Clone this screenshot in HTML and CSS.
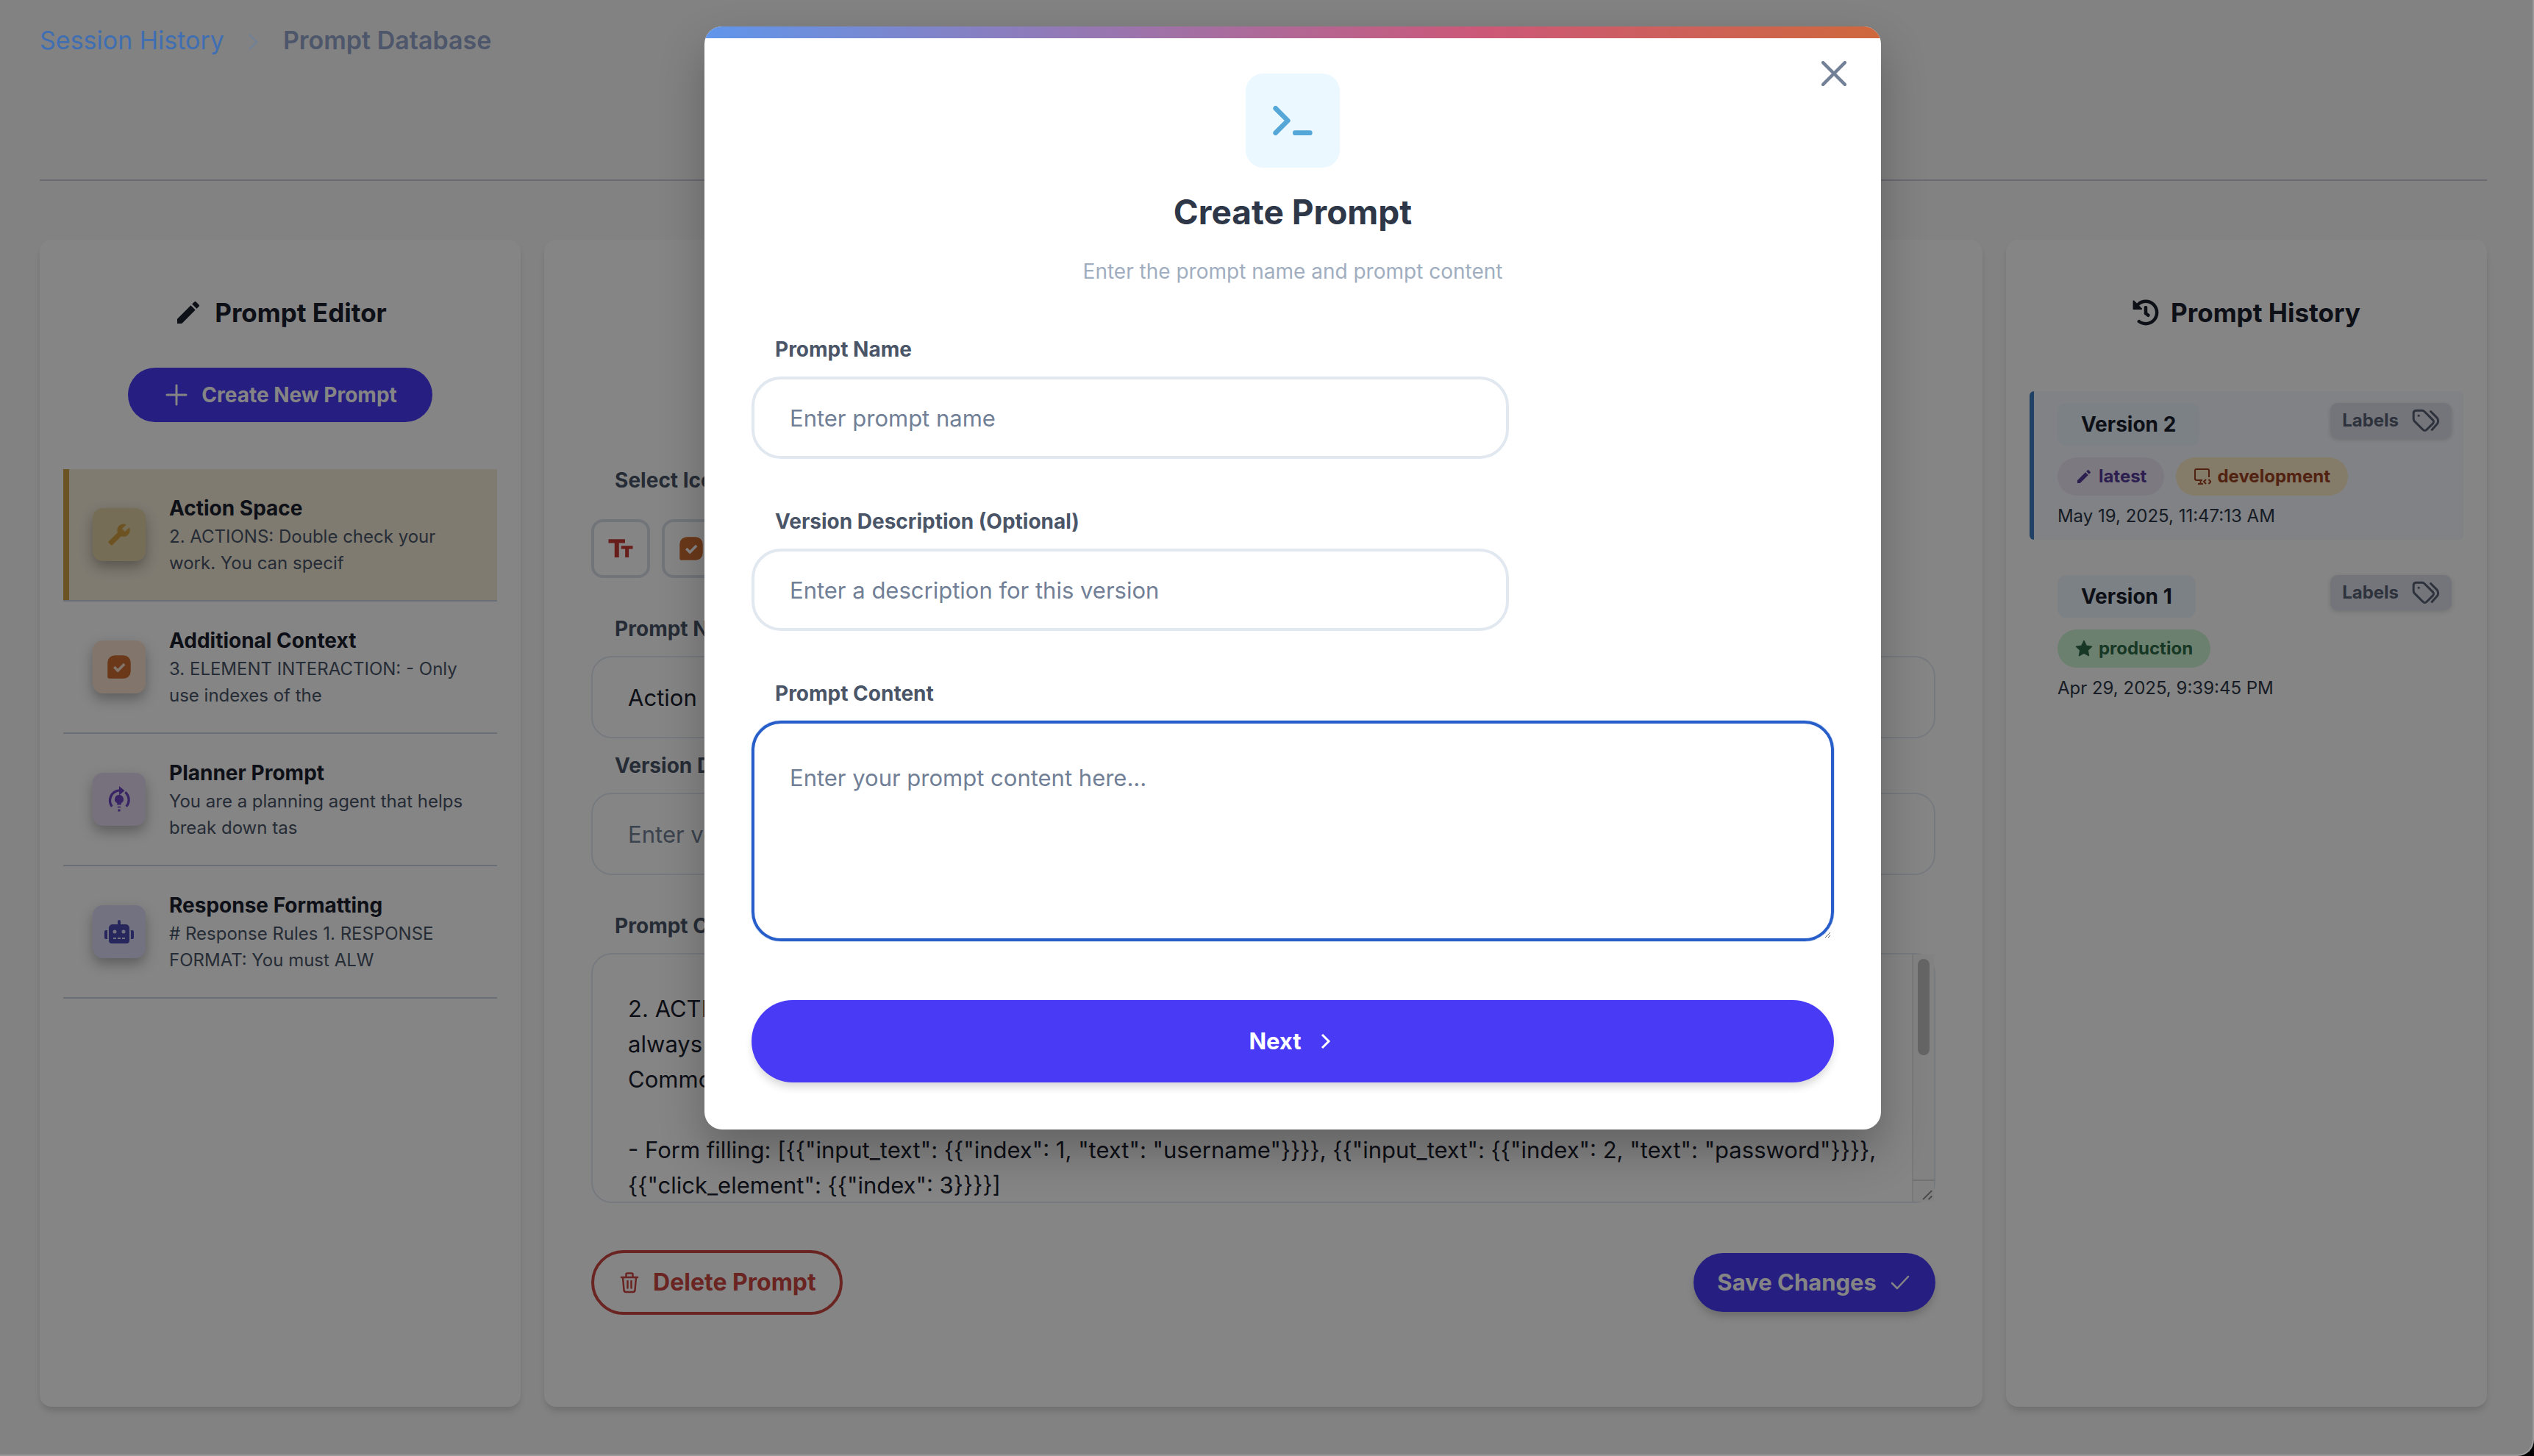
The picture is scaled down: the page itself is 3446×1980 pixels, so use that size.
FILE: index.html
```html
<!DOCTYPE html>
<html lang="en">
<head>
<meta charset="utf-8">
<title>Prompt Database</title>
<link rel="stylesheet" href="styles.css">
</head>
<body>
<div class="window">
  <header class="topbar">
    <nav class="breadcrumb" aria-label="Breadcrumb">
      <a href="#">Session History</a>
      <svg class="crumb-sep" viewBox="0 0 16 24" fill="none" stroke="currentColor" stroke-width="3"><path d="M2 2l10 10L2 22"/></svg>
      <span class="current">Prompt Database</span>
    </nav>
  </header>

  <main class="columns">
    <section class="card editor">
      <h2 class="card-title">
        <svg class="icon-40" viewBox="0 0 24 24" fill="currentColor"><path d="M3 17.25V21h3.75L17.81 9.94l-3.75-3.75L3 17.25zM20.71 7.04a1 1 0 0 0 0-1.41l-2.34-2.34a1 1 0 0 0-1.41 0l-1.83 1.83 3.75 3.75 1.83-1.83z"/></svg>
        Prompt Editor
      </h2>
      <button class="btn create" type="button">
        <svg class="icon-36" viewBox="0 0 36 36" fill="none" stroke="currentColor" stroke-width="3" stroke-linecap="round"><path d="M18 5v26M5 18h26"/></svg>
        Create New Prompt
      </button>
      <ul class="prompts">
        <li class="prompt selected">
          <span class="tile gold"><svg viewBox="0 0 24 24" fill="currentColor"><path transform="matrix(-1 0 0 1 24 0)" d="M22.7 19l-9.1-9.1c.9-2.3.4-5-1.5-6.9-2-2-5-2.4-7.4-1.3L9 6 6 9 1.6 4.7C.4 7.1.9 10.1 2.900 12.100c1.900 1.900 4.600 2.400 6.900 1.500l9.100 9.100c.4.4 1 .4 1.400 0l2.300-2.300c.5-.4.5-1.100.1-1.400z"/></svg></span>
          <div><h3>Action Space</h3><p>2. ACTIONS: Double check your work. You can specif</p></div>
        </li>
        <li class="prompt">
          <span class="tile orange"><svg viewBox="0 0 24 24"><path fill="currentColor" d="M8 1.500h8A6.500 6.500 0 0 1 22.500 8v8a6.500 6.500 0 0 1-6.500 6.500H3A1.500 1.500 0 0 1 1.500 21V8A6.500 6.500 0 0 1 8 1.500z"/><path fill="none" stroke="#f8e1d0" stroke-width="2.400" d="M7.500 12l3.300 3.300 6-6"/></svg></span>
          <div><h3>Additional Context</h3><p>3. ELEMENT INTERACTION: - Only use indexes of the</p></div>
        </li>
        <li class="prompt">
          <span class="tile purple"><svg viewBox="0 0 24 24" fill="currentColor"><path d="M12 8a4 4 0 0 0-1.800 7.570V17h3.600v-1.430A4 4 0 0 0 12 8zM10.600 18.500h2.800v1h-2.800zM11 21h2v2h-2z"/><path fill="none" stroke="currentColor" stroke-width="2.200" d="M5.500 18.500A9.200 9.200 0 0 1 12 3.900M17.500 5.500a9.200 9.200 0 0 1 1 13"/><path d="M12 0l5 4.200-5 4.200z"/></svg></span>
          <div><h3>Planner Prompt</h3><p>You are a planning agent that helps break down tas</p></div>
        </li>
        <li class="prompt">
          <span class="tile indigo"><svg class="wide" viewBox="0 0 640 512" fill="currentColor"><path d="M32 224h32v192H32a32 32 0 0 1-32-32V256a32 32 0 0 1 32-32zm512-48v272a64 64 0 0 1-64 64H160a64 64 0 0 1-64-64V176a80 80 0 0 1 80-80h112V32a32 32 0 0 1 64 0v64h112a80 80 0 0 1 80 80zm-280 80a40 40 0 1 0-40 40 40 40 0 0 0 40-40zm-8 128h-64v32h64zm96 0h-64v32h64zm104-128a40 40 0 1 0-40 40 40 40 0 0 0 40-40zm-8 128h-64v32h64zm192-128v128a32 32 0 0 1-32 32h-32V224h32a32 32 0 0 1 32 32z"/></svg></span>
          <div><h3>Response Formatting</h3><p># Response Rules 1. RESPONSE FORMAT: You must ALW</p></div>
        </li>
      </ul>
    </section>

    <section class="card detail">
      <form>
        <p class="label icon-label">Select Icon</p>
        <div class="icon-picker">
          <button type="button" aria-label="Text icon" class="pick red"><svg viewBox="0 0 24 24" fill="currentColor"><path d="M1 3.500h15v3.500h-5.500V20H6.500V7H1zM12.500 9.500h10.500v2.800h-3.600V20h-3.300v-7.700h-3.600z"/></svg></button>
          <button type="button" aria-label="Check icon" class="pick orange"><svg viewBox="0 0 24 24"><path fill="currentColor" d="M8 1.500h8A6.500 6.500 0 0 1 22.500 8v8a6.500 6.500 0 0 1-6.500 6.500H3A1.500 1.500 0 0 1 1.500 21V8A6.500 6.500 0 0 1 8 1.500z"/><path fill="none" stroke="#fff" stroke-width="2.400" d="M7.500 12l3.300 3.300 6-6"/></svg></button>
        </div>
        <label class="label" for="edit-name">Prompt Name</label>
        <input class="field thin" id="edit-name" type="text" value="Action Space">
        <label class="label near" for="edit-version">Version Description</label>
        <input class="field thin" id="edit-version" type="text" placeholder="Enter version description">
        <label class="label" for="edit-content">Prompt Content</label>
        <div class="scroll-area">
        <textarea class="field thin" id="edit-content">2. ACTIONS: Double check your work. You can specify multiple actions in the list to be executed.
always specify only one action name per item.
Common action sequences:

- Form filling: [{{"input_text": {{"index": 1, "text": "username"}}}}, {{"input_text": {{"index": 2, "text": "password"}}}},
{{"click_element": {{"index": 3}}}}]
- Navigation: [{{"go_to_url": {{"url": "https://example.com"}}}}]

- Actions are executed in the given order
- Only provide the action sequence until the page changes
- Try to be efficient
- Only use multiple actions if it makes sense

</textarea>
          <div class="scrollbar" aria-hidden="true">
            <div class="thumb"></div>
            <svg class="grip" viewBox="0 0 30 30" fill="none" stroke="#8a8a8a" stroke-width="2"><path d="M14 27L27 14M22 27l5-5"/></svg>
          </div>
        </div>
        <div class="actions">
          <button class="btn delete" type="button">
            <svg class="icon-32" viewBox="0 0 32 32" fill="none" stroke="currentColor" stroke-width="2.500" stroke-linecap="round" stroke-linejoin="round"><path d="M5 9h22M7 9l1.500 17.500a3 3 0 0 0 3 2.500h9a3 3 0 0 0 3-2.500L25 9M11.500 8.500V5A1.500 1.500 0 0 1 13 3.500h6A1.500 1.500 0 0 1 20.500 5v3.500M13.500 14v9.500M18.500 14v9.500"/></svg>
            Delete Prompt
          </button>
          <button class="btn save" type="button">
            Save Changes
            <svg class="icon-32" viewBox="0 0 32 32" fill="none" stroke="currentColor" stroke-width="2.500" stroke-linecap="round" stroke-linejoin="round"><path d="M5 17l7 7L27 8"/></svg>
          </button>
        </div>
      </form>
    </section>

    <section class="card history">
      <h2 class="card-title">
        <svg class="icon-36" viewBox="0 0 512 512" fill="currentColor"><path d="M504 255.531c.253 136.640-111.180 248.372-247.820 248.468-59.015.042-113.223-20.530-155.822-54.911-11.077-8.940-11.905-25.541-1.839-35.607l11.267-11.267c8.609-8.609 22.353-9.551 31.891-1.984C173.062 425.135 212.781 440 256 440c101.705 0 184-82.311 184-184 0-101.705-82.311-184-184-184-48.814 0-93.149 18.969-126.068 49.932l50.754 50.754c10.080 10.080 2.941 27.314-11.313 27.314H24c-8.837 0-16-7.163-16-16V38.627c0-14.254 17.234-21.393 27.314-11.314l49.372 49.372C129.209 34.136 189.552 8 256 8c136.810 0 247.747 110.780 248 247.531zm-180.912 78.784l9.823-12.630c8.138-10.463 6.253-25.542-4.210-33.679L288 256.349V152c0-13.255-10.745-24-24-24h-16c-13.255 0-24 10.745-24 24v135.651l65.409 50.874c10.463 8.137 25.541 6.253 33.679-4.210z"/></svg>
        Prompt History
      </h2>
      <article class="version active">
        <div class="version-head">
          <h3>Version 2</h3>
          <button class="labels" type="button">Labels <svg viewBox="0 0 24 24" fill="none" stroke="currentColor" stroke-width="1.800" stroke-linecap="round" stroke-linejoin="round"><path d="M2.500 5.500v5.200a2.500 2.500 0 0 0 .8 1.800l7 7a2 2 0 0 0 2.800 0l5.200-5.200a2 2 0 0 0 0-2.800l-7-7a2.500 2.500 0 0 0-1.800-.8H4.800a2.300 2.300 0 0 0-2.300 1.800zM16.500 4.500l5 5a4 4 0 0 1 0 5.500l-4 4.500M6.600 8h.2"/></svg></button>
        </div>
        <div class="pills">
          <span class="pill latest"><svg viewBox="0 0 24 24" fill="currentColor"><path d="M3 17.250V21h3.750L17.810 9.940l-3.750-3.750L3 17.250zM20.710 7.040a1 1 0 0 0 0-1.410l-2.340-2.340a1 1 0 0 0-1.410 0l-1.830 1.830 3.750 3.750 1.830-1.830z"/></svg>latest</span>
          <span class="pill dev"><svg viewBox="0 0 24 24" fill="none" stroke="currentColor" stroke-width="2"><path d="M12 17H4a2 2 0 0 1-2-2V4a2 2 0 0 1 2-2h15a2 2 0 0 1 2 2v9M6 22h7M9.500 17v5M17 16l-3 3 3 3M20.500 16l3 3-3 3"/></svg>development</span>
        </div>
        <time>May 19, 2025, 11:47:13 AM</time>
      </article>
      <article class="version">
        <div class="version-head">
          <h3>Version 1</h3>
          <button class="labels" type="button">Labels <svg viewBox="0 0 24 24" fill="none" stroke="currentColor" stroke-width="1.800" stroke-linecap="round" stroke-linejoin="round"><path d="M2.500 5.500v5.200a2.500 2.500 0 0 0 .8 1.800l7 7a2 2 0 0 0 2.800 0l5.200-5.200a2 2 0 0 0 0-2.800l-7-7a2.500 2.500 0 0 0-1.800-.8H4.800a2.300 2.300 0 0 0-2.300 1.800zM16.500 4.500l5 5a4 4 0 0 1 0 5.500l-4 4.500M6.600 8h.2"/></svg></button>
        </div>
        <div class="pills">
          <span class="pill prod"><svg viewBox="0 0 24 24" fill="currentColor" stroke="currentColor" stroke-width="1.500" stroke-linejoin="round"><path d="M12 1.500l3.200 6.700 7.300 1-5.300 5.100 1.300 7.300L12 18.100l-6.500 3.500 1.300-7.300L1.500 9.200l7.300-1z"/></svg>production</span>
        </div>
        <time>Apr 29, 2025, 9:39:45 PM</time>
      </article>
    </section>
  </main>

  <div class="overlay">
    <section class="modal" role="dialog" aria-labelledby="modal-title">
      <button class="close" type="button" aria-label="Close"><svg viewBox="0 0 32 32" fill="none" stroke="currentColor" stroke-width="4" stroke-linecap="round"><path d="M2 2l28 28M30 2L2 30"/></svg></button>
      <div class="modal-icon"><svg viewBox="0 0 24 24" fill="none" stroke="currentColor" stroke-width="2" stroke-linecap="round" stroke-linejoin="round"><path d="M5 7l5 5-5 5M13 17h6"/></svg></div>
      <h1 id="modal-title">Create Prompt</h1>
      <p class="subtitle">Enter the prompt name and prompt content</p>
      <form>
        <label class="label" for="new-name">Prompt Name</label>
        <input class="field short" id="new-name" type="text" placeholder="Enter prompt name">
        <label class="label" for="new-version">Version Description (Optional)</label>
        <input class="field short" id="new-version" type="text" placeholder="Enter a description for this version">
        <label class="label" for="new-content">Prompt Content</label>
        <textarea class="field focused" id="new-content" placeholder="Enter your prompt content here..."></textarea>
        <button class="btn next" type="button">Next <svg class="icon-32" viewBox="0 0 32 32" fill="none" stroke="currentColor" stroke-width="3"><path d="M12 7l9 9-9 9"/></svg></button>
      </form>
    </section>
  </div>
</div>
</body>
</html>
```
FILE: styles.css
```css
* { box-sizing: border-box; }
body {
  margin: 0;
  background: #000;
  color: #1a202c;
  font-family: Inter, "Liberation Sans", sans-serif;
  font-size: 28px;
  line-height: 42px;
}
h1, h2, h3, p, ul { margin: 0; padding: 0; }
svg { display: block; flex: none; }
button, input, textarea { font: inherit; color: inherit; margin: 0; }
button { display: flex; align-items: center; justify-content: center; border: 0; background: none; }

.window {
  position: relative;
  display: flex;
  flex-direction: column;
  min-height: 100vh;
  padding: 0 62px 65px 54px;
  background: #fafafa;
  border: solid #9a9a9a;
  border-width: 0 2px 2px 0;
  border-radius: 0 0 22px 0;
  overflow: hidden;
}
.topbar {
  position: relative;
  z-index: 2;
  height: 246px;
  padding-top: 28px;
  border-bottom: 2px solid #696b71;
}
.breadcrumb { display: flex; align-items: center; font-size: 34px; line-height: 54px; }
.breadcrumb a { color: #3f6eb3; text-decoration: none; }
.crumb-sep { width: 16px; height: 24px; margin: 4px 32px 0; color: #748094; }
.current { color: #4d566a; font-weight: 600; }

.columns { flex: 1; display: grid; grid-template-columns: 1fr 2.99fr 1fr; gap: 32px; margin-top: 80px; }
.columns::after { content: ""; position: absolute; inset: 0; z-index: 1; background: rgba(0, 0, 0, .48); }
.card {
  min-width: 0;
  padding: 0 32px;
  background: #fff;
  border-radius: 16px;
  box-shadow: 0 8px 12px -2px rgba(0, 0, 0, .12), 0 4px 8px -2px rgba(0, 0, 0, .06);
}
.card-title {
  display: flex; align-items: center; justify-content: center; gap: 16px;
  margin-top: 72px;
  font-size: 35px; line-height: 54px; font-weight: 700;
}
.icon-32 { width: 32px; height: 32px; }
.icon-36 { width: 36px; height: 36px; }
.icon-40 { width: 40px; height: 40px; }
.btn { font-weight: 700; border-radius: 999px; background: #493af6; color: #fff; }
.create { height: 74px; gap: 16px; margin: 48px auto 0; padding: 0 48px; }

.prompts { list-style: none; margin-top: 64px; }
.prompt {
  display: flex; align-items: center; gap: 32px;
  padding: 32px 32px 32px 40px;
  border-bottom: 2px solid #cbd5e0;
}
.prompt.selected { background: #f4ebd9; box-shadow: inset 8px 0 #cea045; }
.prompt h3 { font-size: 28px; line-height: 42px; font-weight: 700; }
.prompt p { font-size: 24px; line-height: 36px; color: #4a5568; }
.tile {
  display: flex; align-items: center; justify-content: center; flex: none;
  width: 72px; height: 72px; border-radius: 14px;
  box-shadow: 0 8px 18px rgba(0, 0, 0, .3);
}
.tile svg { width: 36px; height: 36px; }
.tile svg.wide { width: 40px; height: 32px; }
.gold { background: #e3d2a8; color: #d0a040; }
.tile.gold svg { width: 32px; height: 32px; }
.orange { color: #ce6e32; }
.tile.orange { background: #f8e1d0; }
.purple { background: #e3d9f0; color: #6b46c1; }
.indigo { background: #dddaf8; color: #4c4bb4; }

.detail { padding: 306px 64px 0; }
.label { display: block; margin-top: 48px; padding-left: 32px; color: #4a5568; font-weight: 700; }
.icon-label { margin-top: 0; }
.label.near { margin-top: 16px; }
.icon-picker { display: flex; gap: 16px; margin-top: 32px; }
.pick { width: 80px; height: 80px; padding: 0; border: 4px solid #d9e0ea; border-radius: 16px; }
.pick svg { width: 36px; height: 36px; }
.red { color: #c53a34; }
.field {
  display: block; width: 100%; height: 112px;
  margin-top: 16px; padding: 0 48px;
  border: 4px solid #e2e8f0; border-radius: 40px;
  background: #fff; outline: 0;
  font-size: 31px; line-height: 48px;
}
.field::placeholder { color: #718096; opacity: 1; }
.thin { border-width: 2px; border-radius: 28px; }
textarea.field { padding: 50px 48px; height: 300px; resize: vertical; }
.scroll-area { position: relative; margin-top: 16px; }
.scroll-area .field { height: 340px; margin: 0; resize: none; overflow: hidden; }
.scrollbar {
  position: absolute; top: 2px; right: 2px; bottom: 2px;
  display: flex; flex-direction: column; align-items: center; justify-content: space-between;
  width: 30px; padding-top: 6px;
  border-left: 2px solid #e8e8e8; background: #fafafa;
}
.thumb { width: 16px; height: 131px; border-radius: 8px; background: #c1c1c1; }
.grip { width: 30px; height: 30px; border-top: 2px solid #dadada; }
.actions { display: flex; align-items: center; justify-content: space-between; margin-top: 64px; }
.delete { height: 88px; gap: 16px; padding: 0 32px; border: 4px solid #cc4640; background: none; color: #cc4640; font-size: 32px; }
.save { height: 80px; gap: 16px; padding: 0 32px; font-size: 31px; box-shadow: 0 8px 12px -2px rgba(0, 0, 0, .2); }

.history .card-title { margin-bottom: 80px; }
.version { padding: 16px 16px 14px 32px; border-left: 6px solid transparent; border-radius: 6px; margin-bottom: 32px; }
.version.active { background: #f7faff; border-left-color: #3f7ec4; }
.version-head { display: flex; align-items: flex-start; justify-content: space-between; }
.version h3 { padding: 8px 32px; border-radius: 12px; background: #ebf8ff; font-size: 28px; line-height: 42px; font-weight: 700; }
.labels {
  gap: 16px; height: 48px; padding: 0 16px;
  border-radius: 10px; background: #dde1ec; color: #566073;
  font-size: 24px; font-weight: 700;
  box-shadow: 0 2px 6px rgba(0, 0, 0, .15);
}
.labels svg { width: 40px; height: 40px; }
.pills { display: flex; gap: 16px; margin: 16px 0 10px; }
.pill { display: flex; align-items: center; gap: 8px; height: 52px; padding: 0 24px; border-radius: 26px; font-size: 24px; font-weight: 700; }
.pill svg { width: 24px; height: 24px; }
.latest { background: #efe8f8; color: #553c9a; }
.dev { background: #feebc8; color: #9c4221; }
.prod { background: #cff5d5; color: #2f6b4a; }
.version time { display: block; font-size: 24px; line-height: 36px; color: #2d3748; }

.overlay {
  position: absolute; inset: 0; z-index: 3;
  display: flex; align-items: flex-start; justify-content: center;
  padding: 36px 0 0 72px;
}
.modal {
  position: relative;
  width: 100%; max-width: 1600px;
  padding: 64px;
  background: #fff;
  border-radius: 24px;
  box-shadow: 0 30px 60px rgba(0, 0, 0, .25);
  overflow: hidden;
  text-align: center;
}
.modal::before {
  content: ""; position: absolute; inset: 0 0 auto; height: 16px;
  background: linear-gradient(90deg, #6096eb, #cc5878 66%, #cf683c);
}
.close { position: absolute; top: 40px; right: 40px; width: 48px; height: 48px; padding: 0; color: #718096; }
.close svg { width: 34px; height: 34px; }
.modal-icon {
  display: flex; align-items: center; justify-content: center;
  width: 128px; height: 128px; margin: 0 auto 28px;
  border-radius: 24px; background: #ebf8ff; color: #55a7d8;
}
.modal-icon svg { width: 80px; height: 80px; }
.modal h1 { font-size: 46px; line-height: 64px; font-weight: 700; color: #2d3748; }
.subtitle { margin-top: 28px; color: #a0aec0; }
.modal .label { margin-top: 64px; text-align: left; }
.short { width: 70%; }
.focused { border-color: #285ec9; box-shadow: 0 0 0 1px #d5e2f5; }
.next { width: 100%; height: 112px; gap: 16px; margin-top: 80px; font-size: 31px; box-shadow: 0 8px 12px -2px rgba(0, 0, 0, .16); }
```
